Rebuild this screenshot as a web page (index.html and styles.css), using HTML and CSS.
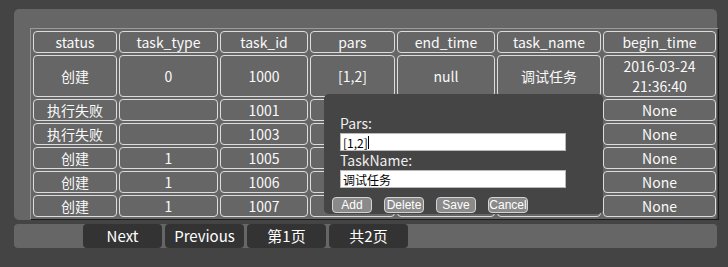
FILE: index.html
```html
<!DOCTYPE html>
<html lang="zh">
<head>
<meta charset="utf-8">
<title>Tasks</title>
<link rel="stylesheet" href="styles.css">
</head>
<body>
<div class="panel">
  <table class="grid">
    <colgroup>
      <col class="c-status"><col class="c-type"><col class="c-id"><col class="c-pars"><col class="c-end"><col class="c-name"><col class="c-begin">
    </colgroup>
    <thead>
      <tr><th>status</th><th>task_type</th><th>task_id</th><th>pars</th><th>end_time</th><th>task_name</th><th>begin_time</th></tr>
    </thead>
    <tbody>
      <tr class="tall"><td>创建</td><td>0</td><td>1000</td><td>[1,2]</td><td>null</td><td>调试任务</td><td>2016-03-24<br>21:36:40</td></tr>
      <tr><td>执行失败</td><td></td><td>1001</td><td></td><td></td><td></td><td>None</td></tr>
      <tr><td>执行失败</td><td></td><td>1003</td><td></td><td></td><td></td><td>None</td></tr>
      <tr><td>创建</td><td>1</td><td>1005</td><td></td><td></td><td></td><td>None</td></tr>
      <tr><td>创建</td><td>1</td><td>1006</td><td></td><td></td><td></td><td>None</td></tr>
      <tr><td>创建</td><td>1</td><td>1007</td><td></td><td></td><td></td><td>None</td></tr>
    </tbody>
  </table>
</div>
<div class="pager">
  <button class="pg">Next</button>
  <button class="pg">Previous</button>
  <button class="pg">第1页</button>
  <button class="pg">共2页</button>
</div>
<div class="dialog">
  <div class="lbl">Pars:</div>
  <div class="field"><input class="inp" type="text" value="[1,2]"><span class="caret"></span></div>
  <div class="lbl">TaskName:</div>
  <div class="field"><input class="inp" type="text" value="调试任务"></div>
  <div class="actions">
    <button class="btn">Add</button>
    <button class="btn">Delete</button>
    <button class="btn">Save</button>
    <button class="btn">Cancel</button>
  </div>
</div>
</body>
</html>
```
FILE: styles.css
```css
html, body {
  margin: 0;
  padding: 0;
  background: #444444;
}
body {
  padding: 9px 0 0 14px;
  font-family: "Noto Sans CJK SC", "Noto Sans", sans-serif;
  color: #ffffff;
  position: relative;
  height: 258px;
  overflow: hidden;
}
.panel {
  width: 687px;
  height: 192px;
  padding: 19px 0 0 16px;
  background: #666666;
  border-radius: 5px;
}
.grid {
  table-layout: fixed;
  width: 689px;
  border-collapse: separate;
  border-spacing: 2px;
  border-top: 1px solid #9a9a9a;
  border-left: 1px solid #9a9a9a;
  border-right: 1px solid #1a1a1a;
  border-bottom: 1px solid #1a1a1a;
}
.c-status { width: 84px; }
.c-type { width: 99px; }
.c-id { width: 88px; }
.c-pars { width: 85px; }
.c-end { width: 98px; }
.c-name { width: 104px; }
.c-begin { width: 113px; }
.grid th, .grid td {
  font-weight: normal;
  font-size: 14px;
  line-height: 20px;
  height: 20px;
  padding: 0;
  text-align: center;
  color: #fafafa;
  border: 1px solid #dcdcdc;
  border-radius: 4px;
  background: #666666;
  white-space: nowrap;
  overflow: hidden;
}
.grid tr.tall td {
  height: 40px;
}
.pager {
  margin-top: 4px;
  width: 634px;
  height: 24px;
  padding-left: 69px;
  background: #666666;
  border-radius: 4px;
  display: flex;
  gap: 3px;
}
.pg {
  width: 79px;
  height: 24px;
  margin: 0;
  padding: 0;
  border: none;
  border-radius: 4px;
  background: #333333;
  color: #ffffff;
  font-family: "Noto Sans CJK SC", "Noto Sans", sans-serif;
  font-size: 15px;
  line-height: 24px;
}
.dialog {
  position: absolute;
  left: 324px;
  top: 94px;
  width: 279px;
  height: 100px;
  padding-top: 20px;
  background: #454545;
  border-radius: 5px;
}
.lbl {
  margin-left: 16px;
  height: 19px;
  line-height: 19px;
  font-size: 14px;
  color: #eeeeee;
}
.field {
  position: relative;
  margin-left: 16px;
  width: 226px;
  height: 18px;
}
.inp {
  display: block;
  box-sizing: border-box;
  width: 226px;
  height: 18px;
  margin: 0;
  padding: 0 2px;
  border: 1px solid #b8b8b8;
  background: #ffffff;
  color: #000000;
  font-family: "Noto Sans CJK SC", "Noto Sans", sans-serif;
  font-size: 12px;
  line-height: 16px;
  outline: none;
}
.caret {
  position: absolute;
  left: 28px;
  top: 3px;
  width: 1px;
  height: 13px;
  background: #000000;
}
.actions {
  margin: 9px 0 0 8px;
  display: flex;
  gap: 12px;
}
.btn {
  box-sizing: border-box;
  width: 40px;
  height: 16px;
  margin: 0;
  padding: 0;
  border: 1px solid #d4d4d4;
  border-radius: 4px;
  background: #8a8a8a;
  color: #ffffff;
  font-family: "Liberation Sans", Arial, sans-serif;
  font-size: 12px;
  line-height: 14px;
}
```
